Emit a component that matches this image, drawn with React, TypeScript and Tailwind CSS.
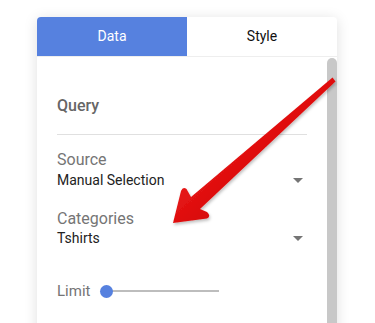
import React from "react";

function Caret() {
  return (
    <svg width="10" height="5" viewBox="0 0 10 5" className="shrink-0">
      <path d="M0 0 L10 0 L5 5 Z" fill="#757575" />
    </svg>
  );
}

function Arrow() {
  return (
    <svg
      className="absolute left-0 top-0 pointer-events-none"
      width="375"
      height="323"
      viewBox="0 0 375 323"
    >
      <defs>
        <linearGradient id="ag" x1="0" y1="0" x2="1" y2="1">
          <stop offset="0" stopColor="#ff3030" />
          <stop offset="0.5" stopColor="#e01010" />
          <stop offset="1" stopColor="#b00000" />
        </linearGradient>
        <filter id="sh" x="-20%" y="-20%" width="140%" height="140%">
          <feDropShadow dx="1" dy="2" stdDeviation="1.5" floodColor="#000" floodOpacity="0.25" />
        </filter>
      </defs>
      <path
        d="M332.5 77.5 L335.5 81.5 L200 209 L207 212 Q211.5 216 207 218.5 L173 223 L181 191 Q183 186 186.5 189 L191 197 Z"
        fill="url(#ag)"
        filter="url(#sh)"
      />
    </svg>
  );
}

export default function App() {
  return (
    <div className="relative w-[375px] h-[323px] overflow-hidden bg-white font-['Roboto',sans-serif]">
      <div className="ml-[37px] mt-[17px] w-[300px] h-[330px] flex flex-col rounded-t-[4px] bg-white shadow-[0_2px_14px_rgba(0,0,0,0.13)] overflow-hidden">
        <div className="flex h-10 shrink-0 border-b border-[#eeeeee]">
          <div className="w-[150px] flex items-center justify-center bg-[#5681df] text-white text-[14px]">
            Data
          </div>
          <div className="flex-1 flex items-center justify-center text-[#111] text-[14px]">
            Style
          </div>
        </div>
        <div className="flex flex-1">
          <div className="flex-1 px-5 pt-[37px]">
            <div className="text-[16px] leading-6 font-medium text-[#666666]">Query</div>
            <div className="mt-4 h-px bg-[#e0e0e0]" />
            <div className="mt-[15px] text-[16px] leading-5 text-[#757575]">Source</div>
            <div className="flex items-center justify-between pr-1 text-[14px] leading-5 text-[#222]">
              <span>Manual Selection</span>
              <Caret />
            </div>
            <div className="mt-[19px] text-[16px] leading-5 text-[#757575]">Categories</div>
            <div className="-mt-px flex items-center justify-between pr-1 text-[14px] leading-5 text-[#222]">
              <span>Tshirts</span>
              <Caret />
            </div>
            <div className="mt-[31px] flex items-center h-6">
              <span className="text-[15px] text-[#757575]">Limit</span>
              <div className="relative ml-[10px] w-[119px] h-[13px] flex items-center">
                <div className="ml-[6px] flex-1 h-[2px] bg-[#bdbdbd]" />
                <div className="absolute left-0 top-0 w-[13px] h-[13px] rounded-full bg-[#5681df]" />
              </div>
            </div>
          </div>
          <div className="w-[10px] pt-px">
            <div className="h-full rounded-t-full bg-[#c8c8c8]" />
          </div>
        </div>
      </div>
      <Arrow />
    </div>
  );
}
